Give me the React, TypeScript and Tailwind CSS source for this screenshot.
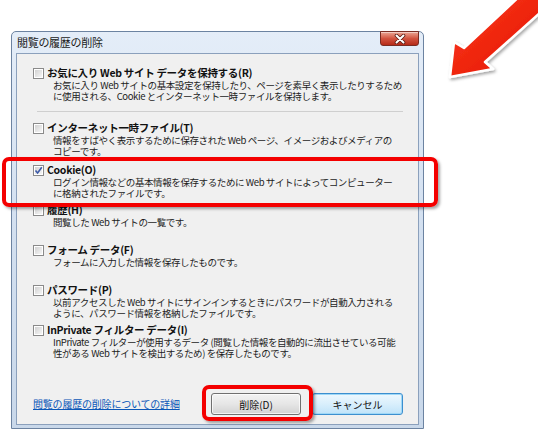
import React from 'react';

type Item = { label: string; desc: string[]; checked?: boolean; h: string };

const items: Item[] = [
  {
    label: 'インターネット一時ファイル(T)',
    desc: ['情報をすばやく表示するために保存された Web ページ、イメージおよびメディアの', 'コピーです。'],
    h: 'h-[42px]',
  },
  {
    label: 'Cookie(O)',
    desc: ['ログイン情報などの基本情報を保存するために Web サイトによってコンピューター', 'に格納されたファイルです。'],
    checked: true,
    h: 'h-[40px]',
  },
  { label: '履歴(H)', desc: ['閲覧した Web サイトの一覧です。'], h: 'h-[40px]' },
  { label: 'フォーム データ(F)', desc: ['フォームに入力した情報を保存したものです。'], h: 'h-[40px]' },
  {
    label: 'パスワード(P)',
    desc: ['以前アクセスした Web サイトにサインインするときにパスワードが自動入力される', 'ように、パスワード情報を格納したファイルです。'],
    h: 'h-[40px]',
  },
  {
    label: 'InPrivate フィルター データ(I)',
    desc: ['InPrivate フィルターが使用するデータ (閲覧した情報を自動的に流出させている可能', '性がある Web サイトを検出するため) を保存したものです。'],
    h: 'h-[38px]',
  },
];

const Checkbox: React.FC<{ checked?: boolean }> = ({ checked }) => (
  <div className="w-[11px] h-[11px] shrink-0 border border-[#8a8a8a] bg-white p-px">
    <div className="w-full h-full bg-gradient-to-br from-[#d2d2d2] to-[#f6f6f6] relative">
      {checked && (
        <svg viewBox="0 0 9 9" className="absolute -left-px -top-px w-[9px] h-[9px]">
          <path d="M1.5 4.5 L3.6 7 L7.8 1.2" fill="none" stroke="#3d5aa8" strokeWidth="1.6" />
        </svg>
      )}
    </div>
  </div>
);

const Row: React.FC<{ item: Item }> = ({ item }) => (
  <div className={`${item.h} flex flex-col`}>
    <div className="flex items-center gap-[3px] h-[14px]">
      <Checkbox checked={item.checked} />
      <span className="text-[10.5px] font-bold tracking-[-0.3px] leading-[14px] text-[#111] whitespace-nowrap">
        {item.label}
      </span>
    </div>
    <div className="pl-[20px] text-[9.5px] tracking-[-0.4px] leading-[11px] text-[#1c1c1c]">
      {item.desc.map((d) => (
        <div key={d} className="whitespace-nowrap">
          {d}
        </div>
      ))}
    </div>
  </div>
);

const Arrow: React.FC = () => (
  <svg viewBox="430 0 108 100" className="absolute left-[430px] top-0 w-[108px] h-[100px] pointer-events-none">
    <defs>
      <linearGradient id="ar" x1="0" y1="0" x2="1" y2="1">
        <stop offset="0" stopColor="#ff3d1f" />
        <stop offset="1" stopColor="#e01000" />
      </linearGradient>
      <filter id="sh" x="-20%" y="-20%" width="150%" height="150%">
        <feDropShadow dx="1.5" dy="2" stdDeviation="1.5" floodColor="#000" floodOpacity="0.35" />
      </filter>
    </defs>
    <polygon
      points="450,77 454,42 464,48 538,-21 560,-5 485,62 493,69"
      fill="url(#ar)"
      stroke="#fff"
      strokeWidth="2.5"
      strokeLinejoin="round"
      filter="url(#sh)"
    />
  </svg>
);

export default function App() {
  return (
    <div className="relative w-[538px] h-[430px] overflow-hidden bg-white pt-[31px] pl-[11px] font-['Noto_Sans_CJK_JP',sans-serif]">
      <div className="w-[413px] h-[398px] border border-[#6c83a1] rounded-t-[5px] bg-gradient-to-b from-[#e4edf8] via-[#d3e0f0] to-[#c9d8ea] flex flex-col px-[4px] pb-[3px]">
        {/* title bar */}
        <div className="h-[21px] flex items-start justify-between">
          <span className="pl-[1px] pt-[3px] text-[11px] leading-[14px] tracking-[-0.3px] text-[#1a1a1a]">閲覧の履歴の削除</span>
          <div className="w-[39px] h-[15px] -mt-px rounded-b-[3px] border border-[#7a2c22] bg-gradient-to-b from-[#e9a594] via-[#d2533f] to-[#b52a17] flex items-center justify-center shadow-[inset_0_1px_0_rgba(255,255,255,0.45)]">
            <svg viewBox="0 0 12 10" className="w-[12px] h-[10px]">
              <path d="M2.5 1.5 L9.5 8.5 M9.5 1.5 L2.5 8.5" stroke="#5a1d14" strokeWidth="3.6" strokeLinecap="round" />
              <path d="M2.5 1.5 L9.5 8.5 M9.5 1.5 L2.5 8.5" stroke="#fff" strokeWidth="2" strokeLinecap="round" />
            </svg>
          </div>
        </div>

        {/* client area */}
        <div className="flex-1 border border-[#8ba0bc] bg-[#f0f0f0] flex flex-col pl-[16px] pt-[12px]">
          <Row
            item={{
              label: 'お気に入り Web サイト データを保持する(R)',
              desc: [
                'お気に入り Web サイトの基本設定を保持したり、ページを素早く表示したりするため',
                'に使用される、Cookie とインターネット一時ファイルを保持します。',
              ],
              h: 'h-[36px]',
            }}
          />
          <div className="mt-[9px] ml-[4px] w-[366px] border-t border-[#cfcfcf]" />
          <div className="mt-[9px] flex flex-col">
            {items.map((it) => (
              <Row key={it.label} item={it} />
            ))}
          </div>

          {/* footer */}
          <div className="mt-auto mb-[9px] pr-[15px] flex items-center">
            <span className="text-[10px] tracking-[-0.2px] leading-[14px] text-[#0b57b8] underline whitespace-nowrap">
              閲覧の履歴の削除についての詳細
            </span>
            <div className="ml-auto flex gap-[11px]">
              <button className="w-[90px] h-[22px] rounded-[3px] border border-[#707070] bg-gradient-to-b from-[#f3f3f3] via-[#e6e6e6] to-[#d2d2d2] text-[10px] text-[#111] shadow-[inset_0_0_0_1px_rgba(255,255,255,0.7)]">
                削除(D)
              </button>
              <button className="w-[91px] h-[22px] rounded-[3px] border border-[#3c8fcf] bg-gradient-to-b from-[#eef8fe] via-[#d9effc] to-[#bfe3f9] text-[10px] text-[#111] shadow-[inset_0_0_0_1px_#9fd8f7]">
                キャンセル
              </button>
            </div>
          </div>
        </div>
      </div>

      {/* overlays */}
      <div className="absolute left-[2px] top-[157px] w-[436px] h-[50px] rounded-[7px] border-[4px] border-[#f40000] shadow-[2px_2px_3px_rgba(0,0,0,0.35)] pointer-events-none" />
      <div className="absolute left-[202px] top-[385px] w-[111px] h-[36px] rounded-[7px] border-[4px] border-[#f40000] shadow-[2px_2px_3px_rgba(0,0,0,0.35)] pointer-events-none" />
      <Arrow />
    </div>
  );
}
